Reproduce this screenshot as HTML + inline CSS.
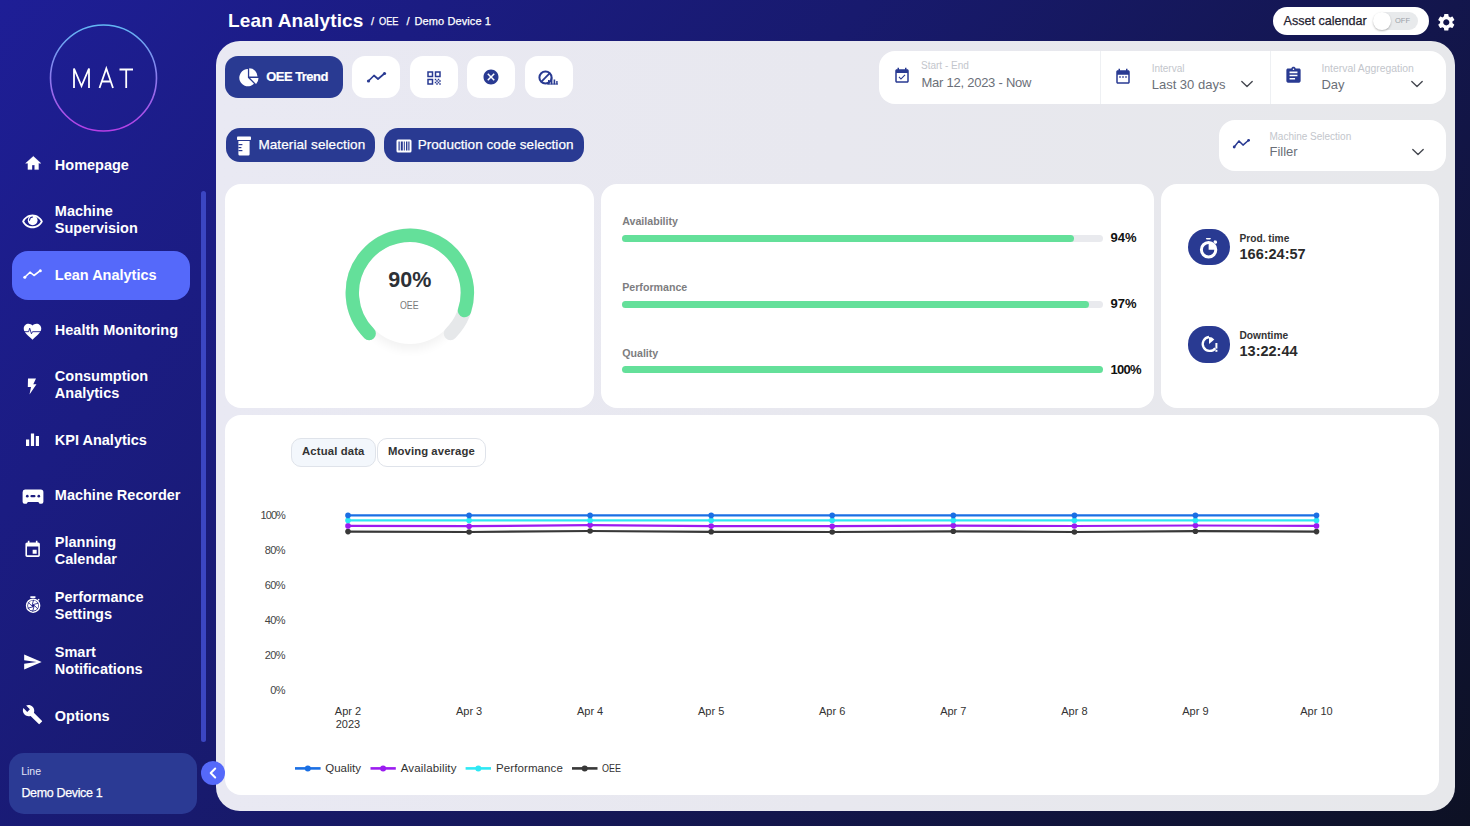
<!DOCTYPE html>
<html><head><meta charset="utf-8">
<style>
*{margin:0;padding:0;box-sizing:border-box}
html,body{width:1470px;height:826px;overflow:hidden}
body{font-family:"Liberation Sans",sans-serif;background:linear-gradient(130deg,#1e1e96 0%,#181a6e 40%,#0d1124 100%);position:relative;color:#fff}
.a{position:absolute}
.t{position:absolute;white-space:nowrap;line-height:1}
.nav{position:absolute;white-space:nowrap;font-weight:bold;font-size:14.5px;line-height:17px;color:#fff;left:54.8px}
.ic{position:absolute;fill:#fff}
.panel{left:216px;top:41px;width:1239px;height:770px;background:linear-gradient(90deg,#e9e9f3,#e8e8ef 50%,#e7e8eb);border-radius:24px}
.card{position:absolute;background:#fff;border-radius:16px}
.btnd{position:absolute;background:#293a92;border-radius:13px}
.btnw{position:absolute;background:#fff;border-radius:13px}
.med{-webkit-text-stroke:0.25px currentColor}
</style></head><body>
<!-- ============ SIDEBAR ============ -->
<svg class="a" style="left:0;top:0" width="210" height="826">
  <defs><linearGradient id="lg" x1="0" y1="0" x2="0" y2="1"><stop offset="0" stop-color="#62b8f4"/><stop offset="1" stop-color="#b63ee6"/></linearGradient></defs>
  <circle cx="103.5" cy="78" r="53" fill="none" stroke="url(#lg)" stroke-width="1.6"/>
  <g stroke="#fff" stroke-width="1.8" fill="none" stroke-linejoin="miter">
    <path d="M74 88 V68.5 L81.5 86 L89 68.5 V88"/>
    <path d="M99.5 88 L106.3 68.5 L113 88 M102 81.5 H110.8"/>
    <path d="M119.5 69.5 H133 M126.2 69.5 V88"/>
  </g>
  <rect x="201" y="191" width="5" height="551" rx="2.5" fill="#3b46c2"/>
</svg>
<div class="a" style="left:12px;top:251px;width:178px;height:49px;background:#5569fa;border-radius:16px"></div>

<!-- nav icons -->
<svg class="ic" style="left:23.5px;top:154.4px" width="18.7" height="18.7" viewBox="0 0 24 24"><path d="M10.3 20v-5.8h3.4V20h5v-8h3L12 3 2 12h3v8z" stroke="#fff" stroke-width="0.4" stroke-linejoin="round"/></svg>
<svg class="ic" style="left:21px;top:210px" width="23" height="23" viewBox="0 0 24 24"><path fill-rule="evenodd" d="M12 4.8C7.3 4.8 3.3 7.7 1.2 11.9c2.1 4.2 6.1 7.1 10.8 7.1s8.7-2.9 10.8-7.1C20.7 7.7 16.7 4.8 12 4.8zm0 2c3.9 0 7.1 2 8.7 5.1-1.6 3.1-4.8 5.1-8.7 5.1s-7.1-2-8.7-5.1C4.9 8.8 8.1 6.8 12 6.8z"/><circle cx="12.2" cy="10.75" r="5.1"/><path d="M8.9 10.6A3.5 3.5 0 0 1 12.1 7.3" stroke="#1e1e90" stroke-width="1.1" fill="none" stroke-linecap="round"/></svg>
<svg class="ic" style="left:22px;top:263px" width="20" height="20" viewBox="0 0 20 20"><g stroke="#fff" stroke-width="1.6" fill="none" stroke-linecap="round" stroke-linejoin="round"><polyline points="2.8,14.3 8,9.2 12,12.5 18.3,7.7"/></g><circle cx="2.8" cy="14.3" r="1.5"/><circle cx="18.3" cy="7.7" r="1.5"/></svg>
<svg class="ic" style="left:22px;top:321px" width="21" height="21" viewBox="0 0 24 24"><path d="M12 21.3l-1.45-1.3C5.4 15.4 2 12.3 2 8.5 2 5.4 4.4 3 7.5 3c1.7 0 3.4.8 4.5 2.1C13.1 3.8 14.8 3 16.5 3 19.6 3 22 5.4 22 8.5c0 3.8-3.4 6.9-8.6 11.5L12 21.3z"/><polyline points="2,12.2 7.6,12.2 8.8,8.2 10.8,14.6 12,12.2 22,12.2" stroke="#1e1e8c" stroke-width="1.05" fill="none"/></svg>
<svg class="ic" style="left:24.5px;top:377.5px" width="14" height="17" viewBox="0 0 14 17"><path d="M3 0.5h8L8.3 6.2h3.2L4.5 16.5 6 9H2.8z"/></svg>
<svg class="ic" style="left:25px;top:433px" width="15" height="13" viewBox="0 0 15 13"><rect x="1" y="6.5" width="3.2" height="6.5"/><rect x="5.9" y="0.5" width="3.2" height="12.5"/><rect x="10.8" y="3" width="3.2" height="10"/></svg>
<svg class="ic" style="left:21.5px;top:488.5px" width="22" height="16" viewBox="0 0 22 16"><path d="M3 0.6h15.8a2.6 2.6 0 0 1 2.6 2.6v9.6a1.9 1.9 0 0 1-1.9 1.9H17.6l-1.3-1.7H5.9l-1.3 1.7H2.5a1.9 1.9 0 0 1-1.9-1.9V3.2A2.6 2.6 0 0 1 3 0.6z"/><g fill="#1c1c80"><circle cx="5.3" cy="7.2" r="1.35"/><rect x="8.4" y="6.1" width="5.1" height="2.2" rx="1.1"/><circle cx="16.8" cy="7.2" r="1.35"/></g></svg>
<svg class="ic" style="left:22.8px;top:539.9px" width="19.3" height="19.3" viewBox="0 0 24 24"><path d="M17 12h-5v5h5v-5zM16 1v2H8V1H6v2H5c-1.11 0-1.99.9-1.99 2L3 19c0 1.1.89 2 2 2h14c1.1 0 2-.9 2-2V5c0-1.1-.9-2-2-2h-1V1h-2zm3 18H5V8h14v11z"/></svg>
<svg class="ic" style="left:24.5px;top:595px" width="17" height="18" viewBox="0 0 17 18"><rect x="5.3" y="1.2" width="5.2" height="1.7" rx="0.4"/><path d="M12.6 4.6l1.3-0.9 0.7 1-1.1 1z"/><circle cx="8.1" cy="10.7" r="6.5" fill="none" stroke="#fff" stroke-width="1.5"/><circle cx="8.1" cy="10.7" r="5.1"/><path d="M8.10 9.60L13.41 8.18M9.05 10.15L12.94 14.04M9.05 11.25L7.63 16.56M8.10 11.80L2.79 13.22M7.15 11.25L3.26 7.36M7.15 10.15L8.57 4.84" stroke="#1c1c84" stroke-width="0.85" fill="none"/><circle cx="8.1" cy="10.7" r="1.2" fill="#1c1c84"/></svg>
<svg class="ic" style="left:22px;top:652px" width="21" height="20" viewBox="0 0 24 24"><path d="M2.01 21L23 12 2.01 3 2 10l15 2-15 2z"/></svg>
<svg class="ic" style="left:22px;top:704px" width="21" height="21" viewBox="0 0 24 24"><path d="M22.7 19l-9.1-9.1c.9-2.3.4-5-1.5-6.9-2-2-5-2.4-7.4-1.3L9 6 6 9 1.6 4.7C.4 7.1.9 10.1 2.9 12.1c1.9 1.9 4.6 2.4 6.9 1.5l9.1 9.1c.4.4 1 .4 1.4 0l2.3-2.3c.5-.4.5-1.1.1-1.4z"/></svg>

<div class="nav" style="top:156.5px">Homepage</div>
<div class="nav" style="top:203.1px">Machine<br>Supervision</div>
<div class="nav" style="top:266.7px">Lean Analytics</div>
<div class="nav" style="top:321.8px">Health Monitoring</div>
<div class="nav" style="top:368.4px">Consumption<br>Analytics</div>
<div class="nav" style="top:432px">KPI Analytics</div>
<div class="nav" style="top:487.1px">Machine Recorder</div>
<div class="nav" style="top:533.7px">Planning<br>Calendar</div>
<div class="nav" style="top:588.8px">Performance<br>Settings</div>
<div class="nav" style="top:643.9px">Smart<br>Notifications</div>
<div class="nav" style="top:707.5px">Options</div>

<div class="a" style="left:9px;top:753px;width:188px;height:61px;background:#2b3a94;border-radius:15px"></div>
<div class="t" style="left:21.2px;top:766.2px;font-size:10.5px;color:#e2e4f8">Line</div>
<div class="t med" style="left:21.4px;top:787.3px;font-size:12.5px;color:#fff;letter-spacing:-0.35px">Demo Device 1</div>

<!-- ============ HEADER ============ -->
<div class="t" style="left:228px;top:10.5px;font-size:19px;font-weight:bold;letter-spacing:0.15px">Lean Analytics</div>
<div class="t med" style="left:371px;top:16.3px;font-size:11px">/</div><div class="t med" style="left:379px;top:16.3px;font-size:11px;transform:scaleX(0.84);transform-origin:0 0">OEE</div>
<div class="t med" style="left:406.5px;top:16.3px;font-size:11px">/</div><div class="t med" style="left:414.5px;top:16.3px;font-size:11px;letter-spacing:0.1px">Demo Device 1</div>

<div class="a" style="left:1273px;top:7px;width:156px;height:27.5px;background:#fff;border-radius:14px"></div>
<div class="t med" style="left:1283.5px;top:15px;font-size:12.6px;color:#1f2230">Asset calendar</div>
<div class="a" style="left:1373.5px;top:12.3px;width:44.5px;height:17.3px;background:#e8eaec;border-radius:9px"></div>
<div class="a" style="left:1373px;top:11.8px;width:17.8px;height:17.8px;background:#fff;border-radius:50%;box-shadow:0 1px 2px rgba(0,0,0,.28)"></div>
<div class="t" style="left:1395px;top:16.5px;font-size:7.5px;color:#9aa0a8">OFF</div>
<svg class="ic" style="left:1435.7px;top:12.3px" width="20.6" height="20.6" viewBox="0 0 24 24"><path d="M19.14 12.94c.04-.3.06-.61.06-.94 0-.32-.02-.64-.07-.94l2.03-1.58c.18-.14.23-.41.12-.61l-1.92-3.32c-.12-.22-.37-.29-.59-.22l-2.39.96c-.5-.38-1.030-.7-1.62-.94l-.36-2.540c-.04-.24-.24-.41-.48-.41h-3.84c-.24 0-.43.17-.47.41l-.36 2.54c-.59.24-1.13.57-1.62.94l-2.39-.96c-.22-.08-.47 0-.59.22L2.74 8.87c-.12.21-.08.47.12.61l2.03 1.58c-.05.3-.09.63-.09.94s.02.64.07.94l-2.03 1.58c-.18.14-.23.41-.12.61l1.920 3.32c.12.22.37.29.59.22l2.39-.96c.5.38 1.03.7 1.62.94l.36 2.54c.05.24.24.41.48.41h3.84c.24 0 .44-.17.47-.41l.36-2.54c.59-.24 1.13-.56 1.62-.94l2.39.96c.22.08.47 0 .59-.22l1.92-3.32c.12-.22.07-.47-.12-.61l-2.01-1.58zM12 15.6c-1.98 0-3.6-1.62-3.6-3.6s1.62-3.6 3.6-3.6 3.6 1.62 3.6 3.6-1.62 3.6-3.6 3.6z"/></svg>

<!-- ============ MAIN PANEL ============ -->
<div class="a panel"></div>
<!-- top buttons -->
<div class="btnd" style="left:225px;top:56px;width:118px;height:42px"></div>
<svg class="ic" style="left:234px;top:62px" width="30" height="30" viewBox="0 0 30 30"><path d="M13.9 15.7L13.9 7.1A8.6 8.6 0 1 0 19.98 21.78Z"/><path d="M15.2 14.5L15.2 6.2A8.3 8.3 0 0 1 23.5 14.5Z"/><path d="M16.1 16.1L24.5 16.1A8.4 8.4 0 0 1 22.04 22.04Z"/></svg>
<div class="t" style="left:266.3px;top:69.6px;font-size:13px;font-weight:bold;letter-spacing:-0.55px;-webkit-text-stroke:0.2px #fff">OEE Trend</div>

<div class="btnw" style="left:352px;top:56px;width:48px;height:42px"></div>
<div class="btnw" style="left:410px;top:56px;width:48px;height:42px"></div>
<div class="btnw" style="left:467px;top:56px;width:48px;height:42px"></div>
<div class="btnw" style="left:525px;top:56px;width:48px;height:42px"></div>
<svg class="a" style="left:366px;top:69px" width="21" height="16" viewBox="0 0 21 16"><g stroke="#293a92" stroke-width="1.7" fill="none" stroke-linecap="round" stroke-linejoin="round"><polyline points="2.5,12 8,6.5 12,10 18.5,4.5"/></g><circle cx="2.5" cy="12" r="1.6" fill="#293a92"/><circle cx="18.5" cy="4.5" r="1.6" fill="#293a92"/></svg>
<svg class="a" style="left:424.5px;top:68.5px" width="18" height="18" viewBox="0 0 24 24" fill="#293a92"><path d="M3 11h8V3H3v8zm2-6h4v4H5V5zM3 21h8v-8H3v8zm2-6h4v4H5v-4zM13 3v8h8V3h-8zm6 6h-4V5h4v4zM19 19h2v2h-2zM13 13h2v2h-2zM15 15h2v2h-2zM13 17h2v2h-2zM15 19h2v2h-2zM17 17h2v2h-2zM17 13h2v2h-2zM19 15h2v2h-2z"/></svg>
<svg class="a" style="left:482.25px;top:68.2px" width="18" height="18" viewBox="0 0 24 24"><path fill="#293a92" d="M12 2C6.47 2 2 6.47 2 12s4.47 10 10 10 10-4.47 10-10S17.53 2 12 2zm5 13.59L15.59 17 12 13.41 8.41 17 7 15.59 10.59 12 7 8.41 8.41 7 12 10.59 15.59 7 17 8.41 13.41 12 17 15.59z"/></svg>
<svg class="a" style="left:538px;top:70px" width="21" height="16" viewBox="0 0 21 16"><g stroke="#293a92" fill="none"><circle cx="7.5" cy="7.5" r="6.1" stroke-width="2"/><path d="M3.2 11.8L11.8 3.2" stroke-width="1.8"/></g><g fill="#293a92"><rect x="10" y="10" width="1.6" height="4.4"/><rect x="12.8" y="7.5" width="1.6" height="6.9"/><rect x="15.6" y="9.5" width="1.6" height="4.9"/><rect x="18.2" y="11" width="1.4" height="3.4"/><rect x="9" y="13.6" width="11" height="0.9"/></g></svg>

<div class="btnd" style="left:225.5px;top:128px;width:149.5px;height:34px;border-radius:14px"></div>
<svg class="a" style="left:236px;top:135.5px" width="16" height="20" viewBox="0 0 16 20" fill="#fff"><rect x="1" y="0.5" width="14" height="3.6" rx="0.8"/><path fill-rule="evenodd" d="M2.4 5h11.2v13.3a1.2 1.2 0 0 1-1.2 1.2H3.6a1.2 1.2 0 0 1-1.2-1.2z"/><g fill="#293a92"><rect x="2.4" y="8" width="4" height="1.2"/><rect x="2.4" y="11" width="3" height="1.2"/><rect x="2.4" y="14" width="4" height="1.2"/></g></svg>
<div class="t med" style="left:258.4px;top:137.7px;font-size:13.5px;letter-spacing:0.1px">Material selection</div>

<div class="btnd" style="left:384.3px;top:128px;width:199.5px;height:34px;border-radius:14px"></div>
<svg class="a" style="left:395.5px;top:138.5px" width="16" height="14" viewBox="0 0 16 14"><rect x="0.5" y="0.5" width="15" height="13" rx="1.5" fill="#fff"/><g fill="#293a92"><rect x="2.5" y="2.5" width="1.2" height="9"/><rect x="4.8" y="2.5" width="2" height="9"/><rect x="7.8" y="2.5" width="1" height="9"/><rect x="10" y="2.5" width="1.4" height="9"/><rect x="12.3" y="2.5" width="1.2" height="9"/></g></svg>
<div class="t med" style="left:417.7px;top:137.7px;font-size:13.5px;letter-spacing:0.05px">Production code selection</div>

<!-- date picker -->
<div class="card" style="left:879px;top:50.5px;width:567px;height:53px;border-radius:16px"></div>
<div class="a" style="left:1099.5px;top:50.5px;width:1px;height:53px;background:#eef0f3"></div>
<div class="a" style="left:1269.5px;top:50.5px;width:1px;height:53px;background:#eef0f3"></div>
<svg class="a" style="left:892.7px;top:67.1px" width="18" height="18" viewBox="0 0 24 24" fill="#293a92"><path d="M16.53 11.06L15.47 10l-4.88 4.88-2.12-2.12-1.060 1.06L10.59 17l5.94-5.94zM19 3h-1V1h-2v2H8V1H6v2H5c-1.11 0-1.99.9-1.99 2L3 19c0 1.1.89 2 2 2h14c1.1 0 2-.9 2-2V5c0-1.1-.9-2-2-2zm0 16H5V8h14v11z"/></svg>
<div class="t" style="left:921px;top:60.5px;font-size:10px;color:#c3c6cc">Start - End</div>
<div class="t" style="left:921.5px;top:75.6px;font-size:13px;color:#6b6f78;letter-spacing:-0.25px">Mar 12, 2023 - Now</div>

<svg class="a" style="left:1114px;top:67.5px" width="18" height="18" viewBox="0 0 24 24" fill="#293a92"><path d="M19 3h-1V1h-2v2H8V1H6v2H5c-1.11 0-1.99.9-1.99 2L3 19c0 1.1.89 2 2 2h14c1.1 0 2-.9 2-2V5c0-1.1-.9-2-2-2zm0 16H5V9h14v10z M7 11h2v2H7zM11 11h2v2h-2zM15 11h2v2h-2z"/></svg>
<div class="t" style="left:1151.7px;top:64px;font-size:10px;color:#c3c6cc">Interval</div>
<div class="t" style="left:1151.7px;top:77.5px;font-size:13px;color:#6b6f78">Last 30 days</div>
<svg class="a" style="left:1240px;top:79px" width="14" height="11" viewBox="0 0 14 11"><path d="M1.8 2.5L7 7.6 12.2 2.5" fill="none" stroke="#44474f" stroke-width="1.35" stroke-linecap="round" stroke-linejoin="round"/></svg>

<svg class="a" style="left:1284px;top:66px" width="19" height="19" viewBox="0 0 24 24" fill="#293a92"><path d="M19 3h-4.18C14.4 1.84 13.3 1 12 1c-1.3 0-2.4.84-2.82 2H5c-1.1 0-2 .9-2 2v14c0 1.1.9 2 2 2h14c1.1 0 2-.9 2-2V5c0-1.1-.9-2-2-2zm-7 0c.55 0 1 .45 1 1s-.45 1-1 1-1-.45-1-1 .45-1 1-1zm2 14H7v-2h7v2zm3-4H7v-2h10v2zm0-4H7V7h10v2z"/></svg>
<div class="t" style="left:1321.4px;top:63.8px;font-size:10.4px;color:#c3c6cc">Interval Aggregation</div>
<div class="t" style="left:1321.4px;top:77.5px;font-size:13px;color:#6b6f78">Day</div>
<svg class="a" style="left:1410px;top:79px" width="14" height="11" viewBox="0 0 14 11"><path d="M1.8 2.5L7 7.6 12.2 2.5" fill="none" stroke="#44474f" stroke-width="1.35" stroke-linecap="round" stroke-linejoin="round"/></svg>

<!-- machine selection -->
<div class="card" style="left:1219px;top:119.5px;width:227px;height:51.5px;border-radius:16px"></div>
<svg class="a" style="left:1230px;top:135px" width="22" height="16" viewBox="0 0 22 16"><g stroke="#293a92" stroke-width="1.5" fill="none" stroke-linecap="round" stroke-linejoin="round"><polyline points="4.2,12 9,5.9 13,10.1 18.6,5.3"/></g><circle cx="4.2" cy="12" r="1.4" fill="#293a92"/><circle cx="18.6" cy="5.3" r="1.4" fill="#293a92"/></svg>
<div class="t" style="left:1269.5px;top:132.2px;font-size:10px;color:#c3c6cc">Machine Selection</div>
<div class="t" style="left:1269.5px;top:145.4px;font-size:13px;color:#6b6f78">Filler</div>
<svg class="a" style="left:1411px;top:147.2px" width="14" height="11" viewBox="0 0 14 11"><path d="M1.8 2.5L7 7.6 12.2 2.5" fill="none" stroke="#44474f" stroke-width="1.35" stroke-linecap="round" stroke-linejoin="round"/></svg>
<!-- ============ CARDS ROW ============ -->
<div class="card" style="left:225px;top:183.5px;width:369px;height:224.7px"></div>
<div class="card" style="left:601px;top:183.7px;width:552.5px;height:224.5px"></div>
<div class="card" style="left:1161px;top:183.5px;width:278px;height:224.7px"></div>

<!-- gauge -->
<div class="a" style="left:358.8px;top:241.9px;width:102px;height:102px;border-radius:50%;box-shadow:0 6px 10px rgba(0,0,0,0.05)"></div>
<svg class="a" style="left:0;top:0" width="600" height="420">
  <path d="M369.14 333.46 A57.5 57.5 0 1 1 450.46 333.46" fill="none" stroke="#e6e8ea" stroke-width="13.4" stroke-linecap="round"/>
  <path d="M369.14 333.46 A57.5 57.5 0 1 1 464.49 310.57" fill="none" stroke="#64e09a" stroke-width="13.4" stroke-linecap="round"/>
</svg>
<div class="t" style="left:388.3px;top:269.9px;font-size:21.5px;font-weight:bold;color:#2d3136">90%</div>
<div class="t" style="left:400.3px;top:299.6px;font-size:11px;color:#7a7a7a;transform:scaleX(0.8);transform-origin:0 0">OEE</div>

<!-- bars -->
<div class="t" style="left:622.2px;top:215.9px;font-size:10.65px;font-weight:bold;color:#7d7d80">Availability</div>
<div class="a" style="left:622px;top:235px;width:481px;height:7px;border-radius:3.5px;background:#e9eaee"></div>
<div class="a" style="left:622px;top:235px;width:452px;height:7px;border-radius:3.5px;background:#64e09a"></div>
<div class="t" style="left:1110.5px;top:231.4px;font-size:13px;font-weight:bold;color:#111">94%</div>

<div class="t" style="left:622.2px;top:282.2px;font-size:10.65px;font-weight:bold;color:#7d7d80">Performance</div>
<div class="a" style="left:622px;top:300.6px;width:481px;height:7px;border-radius:3.5px;background:#e9eaee"></div>
<div class="a" style="left:622px;top:300.6px;width:466.5px;height:7px;border-radius:3.5px;background:#64e09a"></div>
<div class="t" style="left:1110.5px;top:297px;font-size:13px;font-weight:bold;color:#111">97%</div>

<div class="t" style="left:622.2px;top:348.1px;font-size:10.65px;font-weight:bold;color:#7d7d80">Quality</div>
<div class="a" style="left:622px;top:366.3px;width:481px;height:7px;border-radius:3.5px;background:#64e09a"></div>
<div class="t" style="left:1110.5px;top:362.6px;font-size:13px;font-weight:bold;color:#111;letter-spacing:-0.7px">100%</div>

<!-- times -->
<div class="a" style="left:1187.6px;top:229.1px;width:42px;height:36px;border-radius:18px;background:#293a92"></div>
<svg class="a" style="left:1196px;top:236px" width="26" height="26" viewBox="0 0 26 26">
  <path d="M9.8 1.9h5.2l-0.8 1.7h-3.6z" fill="#fff"/>
  <path d="M18.5 4.3l2.2 0.4 0.4 2.2-1.6 1.2-2.2-2.2z" fill="#fff"/>
  <circle cx="12.6" cy="13.75" r="7.2" fill="none" stroke="#fff" stroke-width="3"/>
  <path d="M12.6 13.75V6.5A7.25 7.25 0 0 1 19.85 13.75z" fill="#fff"/>
</svg>
<div class="t" style="left:1239.5px;top:233.6px;font-size:10.2px;font-weight:bold;color:#333">Prod. time</div>
<div class="t" style="left:1239.5px;top:247.3px;font-size:14.5px;font-weight:bold;color:#2a2a2a">166:24:57</div>

<div class="a" style="left:1187.6px;top:326.3px;width:42px;height:36.3px;border-radius:18px;background:#293a92"></div>
<svg class="a" style="left:1196px;top:331px" width="26" height="26" viewBox="0 0 26 26">
  <path d="M19.3 17.2A7 7 0 1 1 13 6" fill="none" stroke="#fff" stroke-width="2.3"/>
  <path d="M13 13V6A7 7 0 0 1 18.3 8.4z" fill="#fff"/>
  <rect x="19.4" y="12" width="2" height="5.6" fill="#fff"/>
  <rect x="19.4" y="18.8" width="2" height="2" fill="#fff"/>
</svg>
<div class="t" style="left:1239.5px;top:331px;font-size:10.2px;font-weight:bold;color:#333">Downtime</div>
<div class="t" style="left:1239.5px;top:344.4px;font-size:14.5px;font-weight:bold;color:#2a2a2a">13:22:44</div>

<!-- ============ CHART CARD ============ -->
<div class="card" style="left:225px;top:414.6px;width:1214px;height:380.4px"></div>
<div class="a" style="left:291px;top:438px;width:85px;height:29px;border-radius:10px;background:#f3f7fc;border:1px solid #dfe3ea"></div>
<div class="a" style="left:377px;top:438px;width:108.5px;height:29px;border-radius:10px;background:#fff;border:1px solid #dfe3ea"></div>
<div class="t" style="left:302px;top:446.2px;font-size:11.3px;font-weight:bold;color:#333;letter-spacing:0.15px">Actual data</div>
<div class="t" style="left:388px;top:446.2px;font-size:11.3px;font-weight:bold;color:#333;letter-spacing:0.1px">Moving average</div>

<div class="t" style="right:1185px;top:509.6px;font-size:11px;color:#444;letter-spacing:-0.9px">100%</div>
<div class="t" style="right:1185px;top:544.6px;font-size:11px;color:#444;letter-spacing:-0.6px">80%</div>
<div class="t" style="right:1185px;top:579.6px;font-size:11px;color:#444;letter-spacing:-0.6px">60%</div>
<div class="t" style="right:1185px;top:614.6px;font-size:11px;color:#444;letter-spacing:-0.6px">40%</div>
<div class="t" style="right:1185px;top:649.6px;font-size:11px;color:#444;letter-spacing:-0.6px">20%</div>
<div class="t" style="right:1185px;top:684.6px;font-size:11px;color:#444;letter-spacing:-0.6px">0%</div>

<svg class="a" style="left:0;top:0" width="1470" height="826">
  <g fill="none" stroke-width="2.2" stroke-linejoin="round">
    <polyline stroke="#383838" points="348,531.6 469.1,532 590.1,531 711.2,531.8 832.2,532 953.3,531.3 1074.4,532 1195.4,531.2 1316.5,531.6"/>
    <polyline stroke="#9b1cf0" points="348,525.9 469.1,526.2 590.1,525.1 711.2,526.1 832.2,526.2 953.3,525.6 1074.4,526 1195.4,525.5 1316.5,525.9"/>
    <polyline stroke="#2ee8f4" points="348,520.4 1316.5,520.4"/>
    <polyline stroke="#1a6fe4" points="348,515.4 1316.5,515.4"/>
  </g>
  <g><circle cx="348.0" cy="531.6" r="2.8" fill="#383838"/><circle cx="348.0" cy="525.9" r="2.8" fill="#9b1cf0"/><circle cx="348.0" cy="520.4" r="2.8" fill="#2ee8f4"/><circle cx="348.0" cy="515.4" r="2.8" fill="#1a6fe4"/><circle cx="469.1" cy="532" r="2.8" fill="#383838"/><circle cx="469.1" cy="526.2" r="2.8" fill="#9b1cf0"/><circle cx="469.1" cy="520.4" r="2.8" fill="#2ee8f4"/><circle cx="469.1" cy="515.4" r="2.8" fill="#1a6fe4"/><circle cx="590.1" cy="531" r="2.8" fill="#383838"/><circle cx="590.1" cy="525.1" r="2.8" fill="#9b1cf0"/><circle cx="590.1" cy="520.4" r="2.8" fill="#2ee8f4"/><circle cx="590.1" cy="515.4" r="2.8" fill="#1a6fe4"/><circle cx="711.2" cy="531.8" r="2.8" fill="#383838"/><circle cx="711.2" cy="526.1" r="2.8" fill="#9b1cf0"/><circle cx="711.2" cy="520.4" r="2.8" fill="#2ee8f4"/><circle cx="711.2" cy="515.4" r="2.8" fill="#1a6fe4"/><circle cx="832.2" cy="532" r="2.8" fill="#383838"/><circle cx="832.2" cy="526.2" r="2.8" fill="#9b1cf0"/><circle cx="832.2" cy="520.4" r="2.8" fill="#2ee8f4"/><circle cx="832.2" cy="515.4" r="2.8" fill="#1a6fe4"/><circle cx="953.3" cy="531.3" r="2.8" fill="#383838"/><circle cx="953.3" cy="525.6" r="2.8" fill="#9b1cf0"/><circle cx="953.3" cy="520.4" r="2.8" fill="#2ee8f4"/><circle cx="953.3" cy="515.4" r="2.8" fill="#1a6fe4"/><circle cx="1074.4" cy="532" r="2.8" fill="#383838"/><circle cx="1074.4" cy="526" r="2.8" fill="#9b1cf0"/><circle cx="1074.4" cy="520.4" r="2.8" fill="#2ee8f4"/><circle cx="1074.4" cy="515.4" r="2.8" fill="#1a6fe4"/><circle cx="1195.4" cy="531.2" r="2.8" fill="#383838"/><circle cx="1195.4" cy="525.5" r="2.8" fill="#9b1cf0"/><circle cx="1195.4" cy="520.4" r="2.8" fill="#2ee8f4"/><circle cx="1195.4" cy="515.4" r="2.8" fill="#1a6fe4"/><circle cx="1316.5" cy="531.6" r="2.8" fill="#383838"/><circle cx="1316.5" cy="525.9" r="2.8" fill="#9b1cf0"/><circle cx="1316.5" cy="520.4" r="2.8" fill="#2ee8f4"/><circle cx="1316.5" cy="515.4" r="2.8" fill="#1a6fe4"/></g>
  <!-- legend -->
  <g stroke-width="2.6">
    <line x1="295" y1="768.4" x2="320.6" y2="768.4" stroke="#1a6fe4"/><circle cx="307.8" cy="768.4" r="3" fill="#1a6fe4"/>
    <line x1="370.5" y1="768.4" x2="395.8" y2="768.4" stroke="#9b1cf0"/><circle cx="383.1" cy="768.4" r="3" fill="#9b1cf0"/>
    <line x1="465.6" y1="768.4" x2="491" y2="768.4" stroke="#2ee8f4"/><circle cx="478.3" cy="768.4" r="3" fill="#2ee8f4"/>
    <line x1="572" y1="768.4" x2="597.5" y2="768.4" stroke="#383838"/><circle cx="584.7" cy="768.4" r="3" fill="#383838"/>
  </g>
</svg>
<div class="t" style="left:325.2px;top:762.6px;font-size:11.5px;color:#333">Quality</div>
<div class="t" style="left:400.7px;top:762.6px;font-size:11.5px;color:#333;letter-spacing:0.15px">Availability</div>
<div class="t" style="left:496px;top:762.6px;font-size:11.5px;color:#333;letter-spacing:0.1px">Performance</div>
<div class="t" style="left:602px;top:762.6px;font-size:11.5px;color:#333;transform:scaleX(0.78);transform-origin:0 0">OEE</div>
<div class="t" style="left:288.0px;width:120px;text-align:center;top:705.6px;font-size:11px;color:#333">Apr 2</div>
<div class="t" style="left:409.1px;width:120px;text-align:center;top:705.6px;font-size:11px;color:#333">Apr 3</div>
<div class="t" style="left:530.1px;width:120px;text-align:center;top:705.6px;font-size:11px;color:#333">Apr 4</div>
<div class="t" style="left:651.2px;width:120px;text-align:center;top:705.6px;font-size:11px;color:#333">Apr 5</div>
<div class="t" style="left:772.2px;width:120px;text-align:center;top:705.6px;font-size:11px;color:#333">Apr 6</div>
<div class="t" style="left:893.3px;width:120px;text-align:center;top:705.6px;font-size:11px;color:#333">Apr 7</div>
<div class="t" style="left:1014.4px;width:120px;text-align:center;top:705.6px;font-size:11px;color:#333">Apr 8</div>
<div class="t" style="left:1135.4px;width:120px;text-align:center;top:705.6px;font-size:11px;color:#333">Apr 9</div>
<div class="t" style="left:1256.5px;width:120px;text-align:center;top:705.6px;font-size:11px;color:#333">Apr 10</div>
<div class="t" style="left:288.0px;width:120px;text-align:center;top:719px;font-size:11px;color:#333">2023</div>
<svg class="a" style="left:201px;top:761px" width="24" height="24" viewBox="0 0 24 24"><circle cx="12" cy="12" r="12" fill="#5569fa"/><path d="M14.2 7.5L9.7 12l4.5 4.5" stroke="#fff" stroke-width="2" fill="none" stroke-linecap="round" stroke-linejoin="round"/></svg>
</body></html>
